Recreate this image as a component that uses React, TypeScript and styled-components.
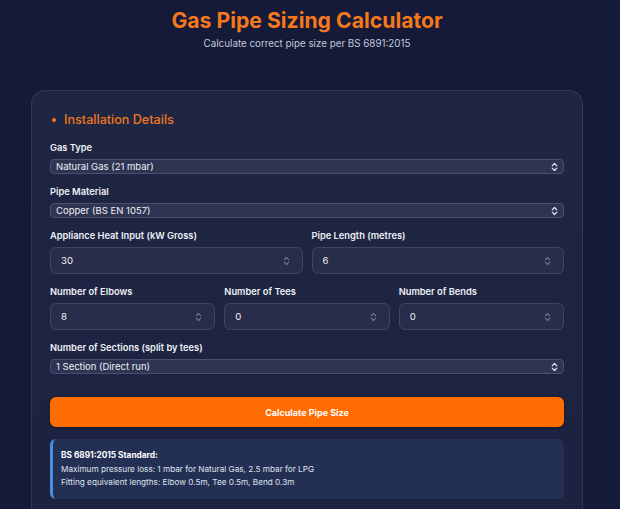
import React from 'react';
import styled, { createGlobalStyle } from 'styled-components';

const GlobalStyle = createGlobalStyle`
  html, body {
    margin: 0;
    padding: 0;
    background: #141a37;
    font-family: Inter, "Liberation Sans", Arial, sans-serif;
    color: #e6e9f2;
  }
  * { box-sizing: border-box; }
`;

// content is centred on a 614px column (the original had a scrollbar gutter)
const Page = styled.div`
  width: 614px;
  padding-top: 5px;
  min-height: 509px;
  overflow: hidden;
`;

const Header = styled.header`
  text-align: center;
`;

const Title = styled.h1`
  margin: 0;
  font-size: 21.2px;
  line-height: 30px;
  font-weight: 700;
  color: #f5781d;
`;

const Subtitle = styled.p`
  margin: 2px 0 0;
  font-size: 9.8px;
  line-height: 14px;
  color: #c4c9d8;
`;

const Card = styled.section`
  width: 552px;
  margin: 39px auto 0;
  padding: 19px 18px 24px 18px;
  border: 1px solid rgba(255, 255, 255, 0.09);
  border-radius: 14px;
  background: linear-gradient(180deg, #1f2643 0%, #1c2240 100%);
`;

const SectionTitle = styled.h2`
  margin: 0 0 10px;
  display: flex;
  align-items: center;
  gap: 8px;
  padding-left: 2px;
  font-size: 12.6px;
  line-height: 20px;
  font-weight: 500;
  color: #f0761f;
  &::before {
    content: '';
    width: 4px;
    height: 4px;
    border-radius: 50%;
    background: #f0761f;
  }
`;

const Form = styled.div`
  display: flex;
  flex-direction: column;
  gap: 10px;
`;

const Row = styled.div<{ $cols: number }>`
  display: grid;
  grid-template-columns: repeat(${(p) => p.$cols}, 1fr);
  gap: 9px;
`;

const Field = styled.label`
  display: flex;
  flex-direction: column;
  gap: 3px;
`;

const Label = styled.span`
  font-size: 9.3px;
  line-height: 16px;
  font-weight: 600;
  color: #eef0f6;
`;

const Control = styled.div`
  position: relative;
  display: flex;
`;

const Select = styled.select`
  appearance: none;
  display: block;
  width: 100%;
  height: 15px;
  padding: 0 20px 0 5px;
  font-family: inherit;
  font-size: 9.5px;
  line-height: 13px;
  color: #eef0f6;
  background: #2e3452;
  border: 1px solid #4a5170;
  border-radius: 4px;
  outline: none;
`;

const NumberInput = styled.input`
  appearance: textfield;
  display: block;
  width: 100%;
  height: 27px;
  padding: 0 24px 0 10px;
  font-family: inherit;
  font-size: 9.6px;
  color: #eef0f6;
  background: #272d4a;
  border: 1px solid #3e4562;
  border-radius: 6px;
  outline: none;
  &::-webkit-inner-spin-button,
  &::-webkit-outer-spin-button {
    -webkit-appearance: none;
    margin: 0;
  }
`;

const Arrows = styled.svg<{ $right: number }>`
  position: absolute;
  top: 50%;
  right: ${(p) => p.$right}px;
  transform: translateY(-50%);
  pointer-events: none;
`;

const Button = styled.button`
  margin-top: 13px;
  height: 30px;
  width: 100%;
  border: none;
  border-radius: 6px;
  background: #ff6c02;
  color: #fff;
  font-family: inherit;
  font-size: 9px;
  font-weight: 700;
  box-shadow: 0 1px 3px rgba(0, 0, 0, 0.35);
`;

const Info = styled.div`
  margin-top: 2px;
  padding: 10px 10px 9px 8px;
  border-left: 3px solid #4a8fe3;
  border-radius: 6px;
  background: #243053;
  font-size: 8.2px;
  line-height: 13.5px;
  color: #dfe3ee;
  p {
    margin: 0;
  }
  strong {
    font-size: 8.3px;
    font-weight: 700;
    color: #fff;
  }
`;

const SelectArrows = () => (
  <Arrows $right={6} width="7" height="10" viewBox="0 0 7 10">
    <path d="M1.2 3.8 L3.5 1.5 L5.8 3.8 M1.2 6.2 L3.5 8.5 L5.8 6.2" fill="none" stroke="#e8ebf3" strokeWidth="1.2" strokeLinecap="round" strokeLinejoin="round" />
  </Arrows>
);

const SpinArrows = () => (
  <Arrows $right={13} width="7" height="10" viewBox="0 0 7 10">
    <path d="M1.2 3.8 L3.5 1.5 L5.8 3.8 M1.2 6.2 L3.5 8.5 L5.8 6.2" fill="none" stroke="#6f7792" strokeWidth="1.1" strokeLinecap="round" strokeLinejoin="round" />
  </Arrows>
);

type SelectFieldProps = { label: string; value: string; options: string[] };

const SelectField = ({ label, value, options }: SelectFieldProps) => (
  <Field>
    <Label>{label}</Label>
    <Control>
      <Select defaultValue={value}>
        {options.map((o) => (
          <option key={o}>{o}</option>
        ))}
      </Select>
      <SelectArrows />
    </Control>
  </Field>
);

type NumberFieldProps = { label: string; value: number };

const NumberField = ({ label, value }: NumberFieldProps) => (
  <Field>
    <Label>{label}</Label>
    <Control>
      <NumberInput type="number" defaultValue={value} />
      <SpinArrows />
    </Control>
  </Field>
);

export default function App() {
  return (
    <Page>
      <GlobalStyle />
      <Header>
        <Title>Gas Pipe Sizing Calculator</Title>
        <Subtitle>Calculate correct pipe size per BS 6891:2015</Subtitle>
      </Header>
      <Card>
        <SectionTitle>Installation Details</SectionTitle>
        <Form>
          <SelectField label="Gas Type" value="Natural Gas (21 mbar)" options={['Natural Gas (21 mbar)', 'LPG (37 mbar)']} />
          <SelectField label="Pipe Material" value="Copper (BS EN 1057)" options={['Copper (BS EN 1057)', 'Steel (BS EN 10255)', 'PE (BS EN 1555)']} />
          <Row $cols={2}>
            <NumberField label="Appliance Heat Input (kW Gross)" value={30} />
            <NumberField label="Pipe Length (metres)" value={6} />
          </Row>
          <Row $cols={3}>
            <NumberField label="Number of Elbows" value={8} />
            <NumberField label="Number of Tees" value={0} />
            <NumberField label="Number of Bends" value={0} />
          </Row>
          <SelectField label="Number of Sections (split by tees)" value="1 Section (Direct run)" options={['1 Section (Direct run)', '2 Sections', '3 Sections']} />
          <Button>Calculate Pipe Size</Button>
          <Info>
            <p><strong>BS 6891:2015 Standard:</strong></p>
            <p>Maximum pressure loss: 1 mbar for Natural Gas, 2.5 mbar for LPG</p>
            <p>Fitting equivalent lengths: Elbow 0.5m, Tee 0.5m, Bend 0.3m</p>
          </Info>
        </Form>
      </Card>
    </Page>
  );
}
